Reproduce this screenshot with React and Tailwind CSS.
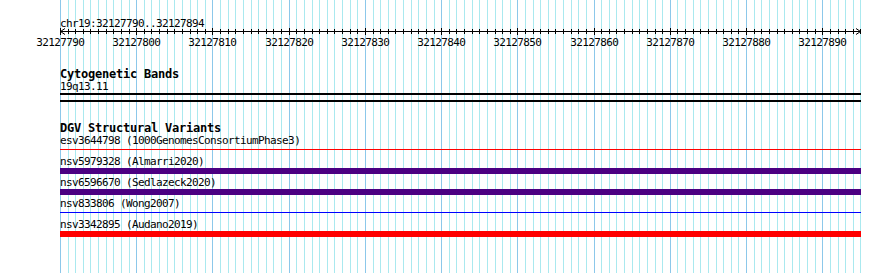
import React from 'react';

// Genome view: chr19 ruler, cytoband track, DGV structural variants track
const ORIGIN = 60;
const PX_PER_BP = 7.623;
const BP_START = 32127790;
const BP_COUNT = 105;

const xAt = (i) => Math.round(ORIGIN + i * PX_PER_BP);

const variants = [
  { name: 'esv3644798', study: '1000GenomesConsortiumPhase3', kind: 'line', color: 'bg-[#ff0000]' },
  { name: 'nsv5979328', study: 'Almarri2020', kind: 'bar', color: 'bg-[#4b0082]' },
  { name: 'nsv6596670', study: 'Sedlazeck2020', kind: 'bar', color: 'bg-[#4b0082]' },
  { name: 'nsv833806', study: 'Wong2007', kind: 'line', color: 'bg-[#0000ff]' },
  { name: 'nsv3342895', study: 'Audano2019', kind: 'bar', color: 'bg-[#ff0000]' },
];

const GridLines = () => {
  const lines = [];
  for (let i = 0; i <= BP_COUNT; i++) {
    const x = xAt(i) + 0.5;
    lines.push(
      <line
        key={i}
        x1={x}
        x2={x}
        y1={0}
        y2={273}
        stroke={i % 10 === 0 ? '#8cc8ea' : '#aae9ef'}
        strokeWidth={1}
      />
    );
  }
  return (
    <svg className="absolute inset-0" width="890" height="273" shapeRendering="crispEdges">
      {lines}
    </svg>
  );
};

const Ruler = () => {
  const ticks = [];
  const labels = [];
  for (let i = 0; i <= BP_COUNT; i++) {
    const x = xAt(i) + 0.5;
    const major = i % 10 === 0;
    ticks.push(
      <line key={i} x1={x} x2={x} y1={major ? 1.5 : 3} y2={major ? 9 : 8} stroke="#000" strokeWidth={1} />
    );
    if (major) {
      labels.push(
        <text
          key={i}
          x={xAt(i) + 0.3}
          y={19.5}
          textAnchor="middle"
          fontFamily="'DejaVu Sans Mono', monospace"
          fontSize="11"
          letterSpacing="-0.62"
          fill="#000"
        >
          {BP_START + i}
        </text>
      );
    }
  }
  const end = xAt(BP_COUNT) + 0.5;
  return (
    <svg className="block -mt-[4px] relative" width="890" height="22">
      <g shapeRendering="crispEdges">
        <line x1={ORIGIN} x2={end} y1={5.5} y2={5.5} stroke="#000" strokeWidth={1} />
        {ticks}
      </g>
      {/* arrowheads */}
      <polyline points={`${ORIGIN + 5},2.5 ${ORIGIN + 0.5},5.5 ${ORIGIN + 5},8.5`} fill="none" stroke="#000" strokeWidth={1} />
      <polyline points={`${end - 4.5},2.5 ${end},5.5 ${end - 4.5},8.5`} fill="none" stroke="#000" strokeWidth={1} />
      {labels}
    </svg>
  );
};

const VariantRow = ({ variant }) => (
  <div>
    <div className="text-[11px] leading-[12px] tracking-[-0.62px] whitespace-pre">
      {variant.name} ({variant.study})
    </div>
    {variant.kind === 'bar' ? (
      <div className={`h-[6px] ${variant.color}`} />
    ) : (
      <div className="h-[6px] pt-[2px]">
        <div className={`h-px ${variant.color}`} />
      </div>
    )}
  </div>
);

const App = () => {
  return (
    <div className="relative w-[890px] h-[273px] overflow-hidden bg-white text-black font-['DejaVu_Sans_Mono',monospace]">
      <GridLines />

      <div className="relative pt-[18px]">
        {/* location + ruler */}
        <div className="pl-[60px] text-[11px] leading-[12px] tracking-[-0.62px]">chr19:32127790..32127894</div>
        <Ruler />

        <div className="pl-[60px]">
          <div className="w-[801px]">
            {/* Cytogenetic Bands */}
            <div className="mt-[20px] font-bold text-[12px] leading-[13px] tracking-[-0.22px]">Cytogenetic Bands</div>
            <div className="text-[11px] leading-[12px] tracking-[-0.62px]">19q13.11</div>
            <div className="h-[2px] bg-black" />
            <div className="mt-[5px] h-[2px] bg-black" />

            {/* DGV Structural Variants */}
            <div className="mt-[20px] font-bold text-[12px] leading-[13px] tracking-[-0.22px]">DGV Structural Variants</div>
            <div className="flex flex-col gap-[3px]">
              {variants.map((v) => (
                <VariantRow key={v.name} variant={v} />
              ))}
            </div>
          </div>
        </div>
      </div>
    </div>
  );
};

export default App;
